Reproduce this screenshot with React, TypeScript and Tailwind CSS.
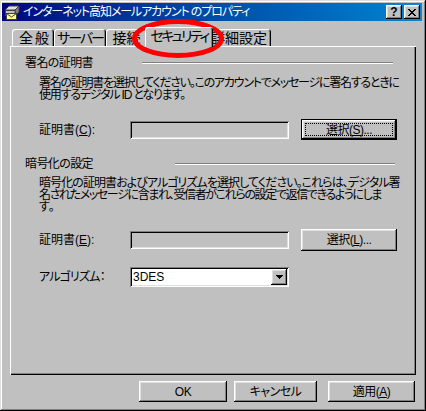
import React from "react";

const raised =
  "shadow-[inset_-1px_-1px_#000,inset_1px_1px_#fff,inset_-2px_-2px_#808080,inset_2px_2px_#dfdfdf]";
const sunken =
  "shadow-[inset_1px_1px_#808080,inset_-1px_-1px_#fff,inset_2px_2px_#000,inset_-2px_-2px_#dfdfdf]";

function U({ children }: { children: React.ReactNode }) {
  return <span className="underline underline-offset-[1px]">{children}</span>;
}

function TitleIcon() {
  return (
    <svg width="16" height="16" viewBox="0 0 16 16" className="shrink-0">
      <polygon points="1,6 5,2 15,2 11,6" fill="#dfdfdf" stroke="#404040" strokeWidth="1" />
      <polygon points="11,6 15,2 15,8 11,12" fill="#808080" stroke="#404040" strokeWidth="1" />
      <rect x="1.5" y="6.5" width="9.5" height="5" fill="#c0c0c0" stroke="#404040" strokeWidth="1" />
      <rect x="2.5" y="9.5" width="10" height="6" fill="#ffff80" stroke="#404040" strokeWidth="1" />
      <polyline points="2.5,9.5 7.5,13 12.5,9.5" fill="none" stroke="#404040" strokeWidth="1" />
    </svg>
  );
}

function Tab({
  children,
  w,
  selected,
  t,
}: {
  children: React.ReactNode;
  w: string;
  selected?: boolean;
  t: string;
}) {
  if (selected) {
    return (
      <div
        className={`relative z-10 -mx-[2px] -mb-px h-[20px] ${w} shrink-0 bg-[#c0c0c0] rounded-t-[3px] shadow-[inset_1px_1px_#fff,inset_-1px_0_#000,inset_-2px_0_#808080] flex items-center justify-center pb-[3px] text-[14px] leading-none whitespace-nowrap ${t}`}
      >
        {children}
      </div>
    );
  }
  return (
    <div
      className={`h-[17px] ${w} shrink-0 bg-[#c0c0c0] rounded-t-[3px] shadow-[inset_1px_1px_#fff,inset_-1px_0_#000,inset_-2px_0_#808080] flex items-center justify-center pt-[1px] text-[14px] leading-none whitespace-nowrap ${t}`}
    >
      {children}
    </div>
  );
}

function Button({
  children,
  w,
  h,
  focused,
}: {
  children: React.ReactNode;
  w: string;
  h: string;
  focused?: boolean;
}) {
  if (focused) {
    return (
      <div className={`${w} ${h} border border-black shrink-0`}>
        <div className={`relative w-full h-full ${raised} flex items-center justify-center`}>
          <div className="absolute inset-[3px] border border-dotted border-black" />
          <span className="leading-none whitespace-nowrap tracking-[-0.5px]">{children}</span>
        </div>
      </div>
    );
  }
  return (
    <div className={`${w} ${h} ${raised} shrink-0 flex items-center justify-center`}>
      <span className="leading-none whitespace-nowrap tracking-[-0.5px]">{children}</span>
    </div>
  );
}

function Etched({ w }: { w: string }) {
  return (
    <div className={`${w} h-[2px] border-t border-t-[#808080] border-b border-b-white`} />
  );
}

export default function App() {
  return (
    <div className="relative w-[426px] h-[411px] bg-[#c0c0c0] overflow-hidden text-black text-[12px] leading-[12px] font-['Liberation_Sans','Noto_Sans_CJK_JP',sans-serif] [font-feature-settings:'palt'] shadow-[inset_-1px_-1px_#000,inset_1px_1px_#dfdfdf,inset_-2px_-2px_#808080,inset_2px_2px_#fff]">
      <div className="pt-[3px] pl-[2px] pr-[4px]">
        {/* Title bar */}
        <div className="h-[18px] flex items-center bg-gradient-to-r from-[#000080] to-[#1084d0] pl-[2px] pr-[2px]">
          <TitleIcon />
          <span className="ml-[3px] text-white text-[12px] leading-none whitespace-nowrap tracking-[-1.1px]">
            インターネット高知メールアカウント のプロパティ
          </span>
          <div className="ml-auto flex gap-[2px]">
            <div className={`w-[16px] h-[14px] bg-[#c0c0c0] ${raised} flex items-center justify-center`}>
              <span className="font-['Liberation_Sans'] font-bold text-[12px] leading-none -mt-px">?</span>
            </div>
            <div className={`w-[16px] h-[14px] bg-[#c0c0c0] ${raised} flex items-center justify-center`}>
              <svg width="8" height="7" viewBox="0 0 8 7" shapeRendering="crispEdges">
                <path
                  d="M0 0h2v1h-2zM6 0h2v1h-2zM1 1h2v1h-2zM5 1h2v1h-2zM2 2h4v1h-4zM3 3h2v1h-2zM2 4h4v1h-4zM1 5h2v1h-2zM5 5h2v1h-2zM0 6h2v1h-2zM6 6h2v1h-2z"
                  fill="#000"
                />
              </svg>
            </div>
          </div>
        </div>

        {/* Tabs */}
        <div className="mt-[6px] ml-[8px] pl-[2px] h-[19px] flex items-end">
          <Tab w="w-[42px]" t="tracking-[2px] pl-[4px]">全般</Tab>
          <Tab w="w-[52px]" t="tracking-[-2px]">サーバー</Tab>
          <Tab w="w-[41px]" t="tracking-[0px]">接続</Tab>
          <Tab w="w-[68px]" t="tracking-[-2.5px]" selected>
            セキュリティ
          </Tab>
          <Tab w="w-[60px]" t="tracking-[0px] pr-[4px]">詳細設定</Tab>
        </div>

        {/* Panel */}
        <div className="ml-[8px] w-[406px] h-[329px] shadow-[inset_1px_1px_#fff,inset_-1px_-1px_#000,inset_-2px_-2px_#808080] pt-[11px]">
          {/* Group 1 */}
          <div className="h-[12px] pl-[15px] flex items-center">
            <div className="w-[117px] whitespace-nowrap tracking-[-0.6px]">署名の証明書</div>
            <Etched w="w-[251px]" />
          </div>
          <div className="mt-[8px] pl-[29px] whitespace-nowrap">
            <div className="tracking-[-1.25px]">署名の証明書を選択してください。このアカウントでメッセージに署名するときに</div>
            <div className="tracking-[-1.2px]">使用するデジタル ID となります。</div>
          </div>
          <div className="mt-[18px] pl-[29px] h-[21px] flex items-center">
            <div className="w-[91px] whitespace-nowrap">
              証明書(<U>C</U>):
            </div>
            <div className={`w-[159px] h-[18px] ${sunken}`} />
            <div className="ml-[12px]">
              <Button w="w-[96px]" h="h-[21px]" focused>
                選択(<U>S</U>)...
              </Button>
            </div>
          </div>

          {/* Group 2 */}
          <div className="mt-[18px] h-[12px] pl-[15px] flex items-center">
            <div className="w-[150px] whitespace-nowrap tracking-[-0.6px]">暗号化の設定</div>
            <Etched w="w-[220px]" />
          </div>
          <div className="mt-[7px] pl-[29px] whitespace-nowrap">
            <div className="tracking-[-0.92px]">暗号化の証明書およびアルゴリズムを選択してください。これらは、デジタル署</div>
            <div className="tracking-[-1.37px]">名されたメッセージに含まれ、受信者がこれらの設定で返信できるようにしま</div>
            <div>す。</div>
          </div>
          <div className="mt-[16px] pl-[29px] h-[22px] flex items-center">
            <div className="w-[91px] whitespace-nowrap">
              証明書(<U>E</U>):
            </div>
            <div className={`w-[159px] h-[18px] ${sunken}`} />
            <div className="ml-[12px]">
              <Button w="w-[96px]" h="h-[22px]">
                選択(<U>L</U>)...
              </Button>
            </div>
          </div>
          <div className="mt-[16px] pl-[29px] h-[20px] flex items-center">
            <div className="w-[91px] whitespace-nowrap tracking-[-0.8px]">アルゴリズム：</div>
            <div className={`w-[159px] h-[20px] bg-white ${sunken} p-[2px] flex items-center`}>
              <span className="pl-[1px] flex-1">3DES</span>
              <div className={`w-[16px] h-[16px] bg-[#c0c0c0] ${raised} flex items-center justify-center`}>
                <svg width="7" height="4" viewBox="0 0 7 4" shapeRendering="crispEdges">
                  <path d="M0 0h7v1h-7zM1 1h5v1h-5zM2 2h3v1h-3zM3 3h1v1h-1z" fill="#000" />
                </svg>
              </div>
            </div>
          </div>
        </div>

        {/* Bottom buttons */}
        <div className="mt-[6px] flex">
          <div className="ml-[137px]">
            <Button w="w-[88px]" h="h-[21px]">OK</Button>
          </div>
          <div className="ml-[7px]">
            <Button w="w-[83px]" h="h-[21px]">キャンセル</Button>
          </div>
          <div className="ml-[11px]">
            <Button w="w-[87px]" h="h-[21px]">
              適用(<U>A</U>)
            </Button>
          </div>
        </div>
      </div>

      {/* Red annotation ellipse */}
      <svg
        className="absolute left-[130px] top-[17px] pointer-events-none"
        width="96"
        height="44"
        viewBox="0 0 96 44"
      >
        <ellipse cx="48" cy="21.5" rx="43.5" ry="17" fill="none" stroke="#ff0000" strokeWidth="5" />
      </svg>
    </div>
  );
}
